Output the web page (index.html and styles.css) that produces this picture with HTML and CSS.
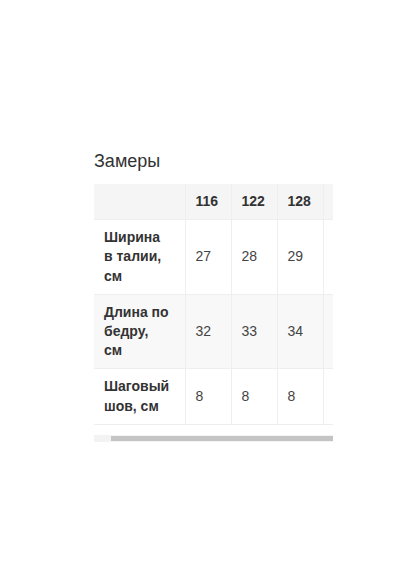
FILE: index.html
```html
<!DOCTYPE html>
<html lang="ru">
<head>
<meta charset="utf-8">
<link rel="stylesheet" href="styles.css">
</head>
<body>
<div class="page">
  <h2 class="title">Замеры</h2>
  <div class="scroller">
    <table class="sizes">
      <colgroup>
        <col class="c-label">
        <col class="c-val">
        <col class="c-val">
        <col class="c-val">
        <col class="c-val">
      </colgroup>
      <tr class="head">
        <th class="label"></th>
        <th>116</th>
        <th>122</th>
        <th>128</th>
        <th></th>
      </tr>
      <tr>
        <td class="label">Ширина<br>в талии,<br>см</td>
        <td>27</td>
        <td>28</td>
        <td>29</td>
        <td></td>
      </tr>
      <tr class="alt">
        <td class="label">Длина по<br>бедру,<br>см</td>
        <td>32</td>
        <td>33</td>
        <td>34</td>
        <td></td>
      </tr>
      <tr>
        <td class="label">Шаговый<br>шов, см</td>
        <td>8</td>
        <td>8</td>
        <td>8</td>
        <td></td>
      </tr>
    </table>
  </div>
  <div class="scrollbar"><div class="thumb"></div></div>
</div>
</body>
</html>
```
FILE: styles.css
```css
html, body {
  margin: 0;
  padding: 0;
  background: #fff;
}
.page {
  padding: 151px 0 0 94px;
  font-family: "Liberation Sans", Arial, sans-serif;
  color: #333;
}
.title {
  margin: 0 0 13px 0;
  font-size: 18px;
  line-height: 20px;
  font-weight: normal;
  color: #333;
}
.scroller {
  width: 239px;
  overflow: hidden;
}
.sizes {
  border-collapse: collapse;
  table-layout: fixed;
  width: 275px;
  font-size: 14px;
  line-height: 19.2px;
  white-space: nowrap;
}
.c-label {
  width: 91px;
}
.c-val {
  width: 46px;
}
.sizes th,
.sizes td {
  border: 1px solid #eee;
  padding: 8px 10px;
  text-align: left;
  vertical-align: middle;
  color: #444;
}
.sizes th {
  font-weight: bold;
  color: #333;
}
.sizes .label {
  font-weight: bold;
  color: #333;
}
.sizes tr:first-child th {
  border-top: 0;
}
.sizes tr th:first-child,
.sizes tr td:first-child {
  border-left: 0;
}
.head {
  background: #f5f5f5;
}
.alt {
  background: #f8f8f8;
}
.scrollbar {
  width: 239px;
  height: 7px;
  margin-top: 10px;
  background: #f3f3f3;
  display: flex;
  align-items: center;
}
.thumb {
  margin-left: 17px;
  width: 222px;
  height: 5px;
  background: #c4c4c4;
}
```
